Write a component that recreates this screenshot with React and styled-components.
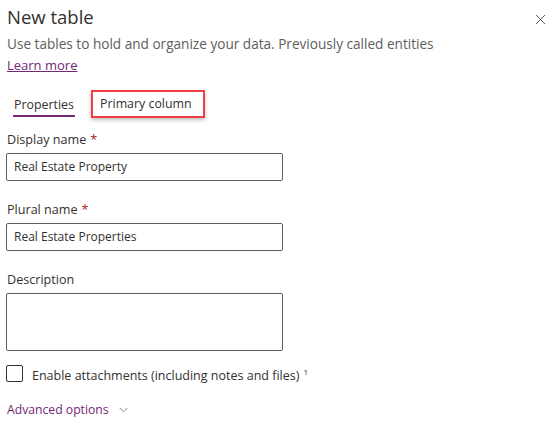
import React from "react";
import styled, { createGlobalStyle } from "styled-components";

const GlobalStyle = createGlobalStyle`
  html, body {
    margin: 0;
    padding: 0;
    background: #ffffff;
  }
  body {
    font-family: "Open Sans", "Noto Sans", Arial, sans-serif;
    color: #323130;
  }
`;

const Panel = styled.div`
  width: 559px;
  height: 432px;
  box-sizing: border-box;
  padding: 4px 0 0 7px;
  overflow: hidden;
`;

const Header = styled.div`
  display: flex;
  justify-content: space-between;
  align-items: flex-start;
`;

const Title = styled.h1`
  margin: 0;
  font-size: 18.5px;
  font-weight: 400;
  line-height: 26px;
  color: #323130;
`;

const CloseButton = styled.button`
  border: none;
  background: none;
  padding: 0;
  margin: 9px 13px 0 0;
  width: 12px;
  height: 12px;
  display: flex;
  align-items: center;
  justify-content: center;
  cursor: pointer;
`;

const Subtitle = styled.p`
  margin: 4px 0 0;
  font-size: 13.6px;
  line-height: 19px;
  color: #605e5c;
`;

const LearnMore = styled.a`
  display: inline-block;
  font-size: 13px;
  line-height: 19px;
  color: #742774;
  text-decoration: underline;
`;

const Tabs = styled.div`
  display: flex;
  align-items: flex-start;
  gap: 16px;
  margin: 15px 0 0 6px;
`;

const Tab = styled.div`
  font-size: 12.4px;
  line-height: 20px;
  color: #323130;
  padding: 5px 1px 0;
  border-bottom: 2px solid ${(p) => (p.$active ? "#742774" : "transparent")};
`;

const Highlight = styled.div`
  border: 2.5px solid #ef3f45;
  box-shadow: 0 2px 4px rgba(0, 0, 0, 0.25);
  padding: 2px 11px 2px 7px;
  font-size: 12.4px;
  line-height: 20px;
  color: #323130;
`;

const Field = styled.div`
  display: flex;
  flex-direction: column;
  margin-top: ${(p) => p.$top}px;
`;

const Label = styled.label`
  font-size: 12.6px;
  font-weight: 500;
  line-height: 20px;
  color: #323130;
  margin-bottom: 3px;
`;

const Required = styled.span`
  color: #a4262c;
  margin-left: 4px;
`;

const Input = styled.div`
  box-sizing: border-box;
  width: 277px;
  height: ${(p) => p.$height || 28}px;
  margin-left: -1px;
  border: 1px solid #605e5c;
  border-radius: 2px;
  padding: 0 7px;
  font-size: 12px;
  line-height: 26px;
  color: #323130;
`;

const CheckRow = styled.div`
  display: flex;
  align-items: center;
  gap: 9px;
  margin: 12px 0 0 -1px;
  font-size: 12.5px;
  line-height: 17px;
  color: #323130;
`;

const Box = styled.span`
  box-sizing: border-box;
  width: 17px;
  height: 17px;
  border: 1px solid #323130;
  border-radius: 2px;
`;

const Sup = styled.sup`
  font-size: 8px;
  margin-left: 4px;
  vertical-align: 5px;
`;

const Advanced = styled.div`
  display: flex;
  align-items: center;
  gap: 10px;
  margin-top: 16px;
  font-size: 12.2px;
  line-height: 20px;
  color: #742774;
`;

export default function App() {
  return (
    <>
      <GlobalStyle />
      <Panel>
        <Header>
          <Title>New table</Title>
          <CloseButton aria-label="Close">
            <svg width="11" height="11" viewBox="0 0 11 11">
              <path d="M1 1L10 10M10 1L1 10" stroke="#605e5c" strokeWidth="1" />
            </svg>
          </CloseButton>
        </Header>
        <Subtitle>Use tables to hold and organize your data. Previously called entities</Subtitle>
        <LearnMore href="#">Learn more</LearnMore>
        <Tabs>
          <Tab $active>Properties</Tab>
          <Highlight>Primary column</Highlight>
        </Tabs>
        <Field $top={12}>
          <Label>Display name<Required>*</Required></Label>
          <Input>Real Estate Property</Input>
        </Field>
        <Field $top={19}>
          <Label>Plural name<Required>*</Required></Label>
          <Input>Real Estate Properties</Input>
        </Field>
        <Field $top={19}>
          <Label>Description</Label>
          <Input $height={58} />
        </Field>
        <CheckRow>
          <Box />
          <span>Enable attachments (including notes and files)<Sup>1</Sup></span>
        </CheckRow>
        <Advanced>
          Advanced options
          <svg width="9" height="6" viewBox="0 0 9 6">
            <path d="M0.5 0.8L4.5 4.8L8.5 0.8" stroke="#8a8886" strokeWidth="1" fill="none" />
          </svg>
        </Advanced>
      </Panel>
    </>
  );
}
